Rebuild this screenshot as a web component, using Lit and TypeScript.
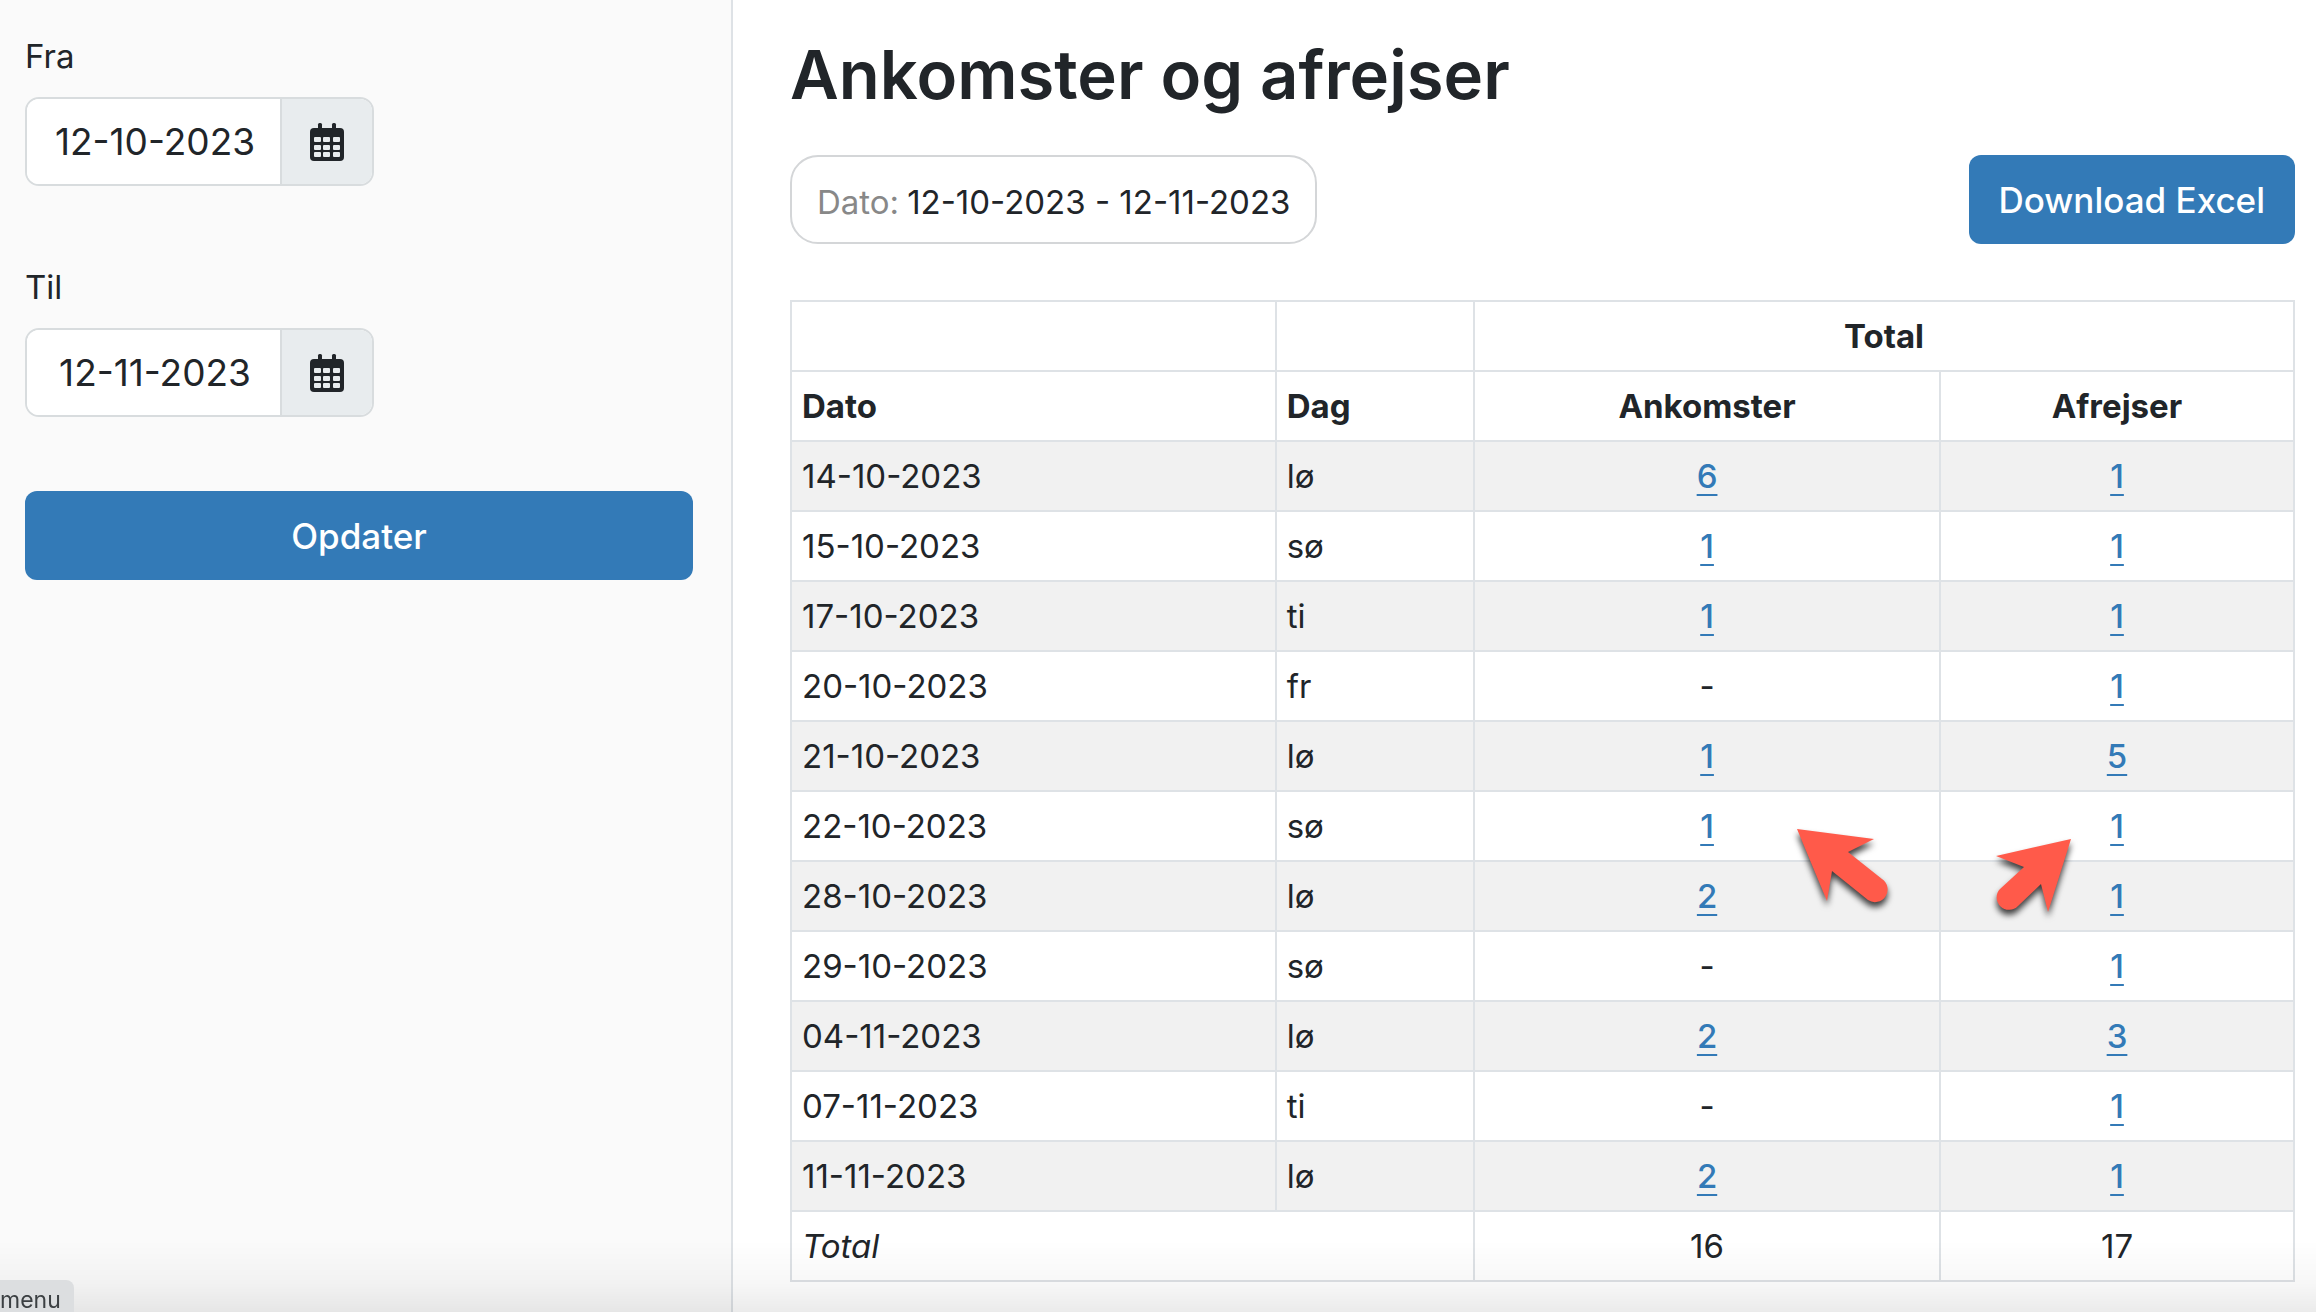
import { LitElement, html, css, svg, nothing } from "lit";
import { customElement, property } from "lit/decorators.js";

interface DayRow {
  date: string;
  day: string;
  arrivals: number;
  departures: number;
}

const ROWS: DayRow[] = [
  { date: "14-10-2023", day: "lø", arrivals: 6, departures: 1 },
  { date: "15-10-2023", day: "sø", arrivals: 1, departures: 1 },
  { date: "17-10-2023", day: "ti", arrivals: 1, departures: 1 },
  { date: "20-10-2023", day: "fr", arrivals: 0, departures: 1 },
  { date: "21-10-2023", day: "lø", arrivals: 1, departures: 5 },
  { date: "22-10-2023", day: "sø", arrivals: 1, departures: 1 },
  { date: "28-10-2023", day: "lø", arrivals: 2, departures: 1 },
  { date: "29-10-2023", day: "sø", arrivals: 0, departures: 1 },
  { date: "04-11-2023", day: "lø", arrivals: 2, departures: 3 },
  { date: "07-11-2023", day: "ti", arrivals: 0, departures: 1 },
  { date: "11-11-2023", day: "lø", arrivals: 2, departures: 1 },
];

@customElement("date-field")
export class DateField extends LitElement {
  @property() label = "";
  @property() value = "";

  static styles = css`
    :host {
      display: block;
    }
    .label {
      display: block;
      line-height: 48px;
      margin-bottom: 17px;
    }
    .group {
      display: flex;
      box-sizing: border-box;
      width: 349px;
      height: 89px;
      border: 2px solid #d8dcde;
      border-radius: 14px;
      overflow: hidden;
      background: #fff;
    }
    .input {
      flex: 1;
      min-width: 0;
      box-sizing: border-box;
      border: 0;
      padding: 0 0 0 3px;
      text-align: center;
      background: #fff;
      color: inherit;
      font: inherit;
      font-size: 37px;
    }
    .button {
      box-sizing: border-box;
      width: 92px;
      padding: 0;
      border: 0;
      border-left: 2px solid #d8dcde;
      background: #e8ecee;
      color: #212529;
      display: flex;
      align-items: center;
      justify-content: center;
    }
    .icon {
      width: 34px;
      height: 38px;
    }
  `;

  render() {
    return html`
      <label class="label" for="date">${this.label}</label>
      <div class="group">
        <input class="input" id="date" type="text" .value=${this.value} />
        <button class="button" type="button" aria-label="Kalender">
          <svg class="icon" viewBox="0 0 34 38" aria-hidden="true">
            <rect x="8" y="0" width="4" height="9" rx="1.5" fill="currentColor" />
            <rect x="22" y="0" width="4" height="9" rx="1.500" fill="currentColor" />
            <rect x="0" y="5" width="34" height="33" rx="4" fill="currentColor" />
            ${[14, 22, 29].map((y) =>
              [4, 13, 23].map((x) => svg`<rect x=${x} y=${y} width="7" height="5" rx="1" fill="#e8ecee" />`),
            )}
          </svg>
        </button>
      </div>
    `;
  }
}

@customElement("app-root")
export class AppRoot extends LitElement {
  static styles = css`
    :host {
      display: block;
      font-family: Inter, "Liberation Sans", sans-serif;
      font-size: 33px;
      line-height: 48px;
      color: #212529;
      background: #fff;
    }
    .page {
      display: grid;
      grid-template-columns: 733px minmax(0, 1fr);
      min-height: 100vh;
    }
    .sidebar {
      box-sizing: border-box;
      padding: 32px 38px 32px 25px;
      background: #fafafa;
      border-right: 2px solid #dee2e6;
    }
    .form {
      display: flex;
      flex-direction: column;
      gap: 74px;
    }
    .fields {
      display: grid;
      gap: 77px;
    }
    .main {
      padding: 31px 21px 30px 57px;
    }
    .title {
      margin: 0;
      font-size: 67px;
      line-height: 88px;
      font-weight: 600;
    }
    .bar {
      display: flex;
      align-items: center;
      justify-content: space-between;
      margin: 36px 0 56px;
    }
    .chip {
      box-sizing: border-box;
      height: 89px;
      display: flex;
      align-items: center;
      padding: 4px 25px 0;
      gap: 8px;
      border: 2px solid #d4d6d8;
      border-radius: 28px;
    }
    .muted {
      color: #888;
    }
    .primary {
      height: 89px;
      padding: 0 30px;
      border: 0;
      border-radius: 12px;
      background: #337ab7;
      color: #fff;
      font: inherit;
      font-size: 35px;
      font-weight: 500;
    }
    .table-wrap {
      position: relative;
    }
    .table {
      width: 100%;
      table-layout: fixed;
      border-collapse: collapse;
    }
    .col-date {
      width: 32.25%;
    }
    .col-day {
      width: 13.2%;
    }
    .col-arrivals {
      width: 31%;
    }
    .cell {
      height: 48px;
      padding: 10px;
      border: 2px solid #dee2e6;
      text-align: left;
      font-weight: 400;
    }
    .head {
      font-weight: 700;
    }
    .num {
      text-align: center;
    }
    .striped {
      background: #f1f1f1;
    }
    .total {
      font-style: italic;
    }
    .link {
      color: #337ab7;
      font-weight: 500;
      text-underline-offset: 6px;
      text-decoration-thickness: 2px;
    }
    .pointer {
      position: absolute;
      width: 120px;
      height: 110px;
      pointer-events: none;
      filter: drop-shadow(0 5px 3px rgba(0, 0, 0, 0.75));
    }
    .pointer-left {
      top: 510px;
      left: 65.8%;
    }
    .pointer-right {
      top: 520px;
      left: 79.1%;
    }
    .fade {
      position: fixed;
      left: 0;
      right: 0;
      bottom: 0;
      height: 72px;
      pointer-events: none;
      background: linear-gradient(rgba(0, 0, 0, 0), rgba(0, 0, 0, 0.03) 60%, rgba(0, 0, 0, 0.08));
    }
    .status {
      position: fixed;
      left: 0;
      bottom: 0;
      box-sizing: border-box;
      height: 32px;
      padding: 8px 13px 0 0;
      border-top-right-radius: 8px;
      background: #dcdee0;
      color: #3c4043;
      font-size: 23px;
      line-height: 24px;
    }
  `;

  private count(n: number) {
    return n ? html`<a class="link" href="#">${n}</a>` : "-";
  }

  render() {
    const sum = (key: "arrivals" | "departures") => ROWS.reduce((t, r) => t + r[key], 0);
    return html`
      <div class="page">
        <aside class="sidebar">
          <form class="form">
            <div class="fields">
              <date-field label="Fra" value="12-10-2023"></date-field>
              <date-field label="Til" value="12-11-2023"></date-field>
            </div>
            <button class="primary" type="button">Opdater</button>
          </form>
        </aside>
        <main class="main">
          <h1 class="title">Ankomster og afrejser</h1>
          <div class="bar">
            <div class="chip"><span class="muted">Dato:</span><span>12-10-2023 - 12-11-2023</span></div>
            <button class="primary" type="button">Download Excel</button>
          </div>
          <div class="table-wrap">
            <table class="table">
              <colgroup>
                <col class="col-date" />
                <col class="col-day" />
                <col class="col-arrivals" />
                <col />
              </colgroup>
              <thead>
                <tr>
                  <td class="cell"></td>
                  <td class="cell"></td>
                  <th class="cell head num" colspan="2">Total</th>
                </tr>
                <tr>
                  <th class="cell head" scope="col">Dato</th>
                  <th class="cell head" scope="col">Dag</th>
                  <th class="cell head num" scope="col">Ankomster</th>
                  <th class="cell head num" scope="col">Afrejser</th>
                </tr>
              </thead>
              <tbody>
                ${ROWS.map(
                  (r, i) => html`<tr class=${i % 2 === 0 ? "striped" : nothing}>
                    <td class="cell">${r.date}</td>
                    <td class="cell">${r.day}</td>
                    <td class="cell num">${this.count(r.arrivals)}</td>
                    <td class="cell num">${this.count(r.departures)}</td>
                  </tr>`,
                )}
              </tbody>
              <tfoot>
                <tr>
                  <th class="cell total" scope="row" colspan="2">Total</th>
                  <td class="cell num">${sum("arrivals")}</td>
                  <td class="cell num">${sum("departures")}</td>
                </tr>
              </tfoot>
            </table>
            <svg class="pointer pointer-left" viewBox="1780 810 120 110" aria-hidden="true">
              <path
                fill="#ff5a4a"
                d="M1797 829L1874 839L1848 852L1882 879A12 12 0 0 1 1868 900L1832 871L1827 901Z"
              />
            </svg>
            <svg class="pointer pointer-right" viewBox="1980 820 120 110" aria-hidden="true">
              <path
                fill="#ff5a4a"
                d="M2071 839L1996 856L2024 867L2000 889A12 12 0 0 0 2018 906L2041 884L2048 912Z"
              />
            </svg>
          </div>
        </main>
      </div>
      <div class="fade"></div>
      <div class="status">menu</div>
    `;
  }
}
